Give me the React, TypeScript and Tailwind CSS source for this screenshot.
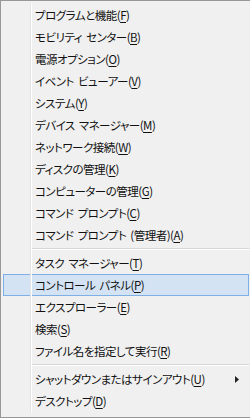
import React from "react";

type Item = { label: string; key: string; highlight?: boolean; submenu?: boolean } | "sep";

const items: Item[] = [
  { label: "プログラムと機能", key: "F" },
  { label: "モビリティ センター", key: "B" },
  { label: "電源オプション", key: "O" },
  { label: "イベント ビューアー", key: "V" },
  { label: "システム", key: "Y" },
  { label: "デバイス マネージャー", key: "M" },
  { label: "ネットワーク接続", key: "W" },
  { label: "ディスクの管理", key: "K" },
  { label: "コンピューターの管理", key: "G" },
  { label: "コマンド プロンプト", key: "C" },
  { label: "コマンド プロンプト (管理者)", key: "A" },
  "sep",
  { label: "タスク マネージャー", key: "T" },
  { label: "コントロール パネル", key: "P", highlight: true },
  { label: "エクスプローラー", key: "E" },
  { label: "検索", key: "S" },
  { label: "ファイル名を指定して実行", key: "R" },
  "sep",
  { label: "シャットダウンまたはサインアウト", key: "U", submenu: true },
  { label: "デスクトップ", key: "D" },
];

export default function App() {
  return (
    <div className="w-[250px] h-[418px] overflow-hidden bg-[#f0f0f0]">
      <div
        className="relative w-[252px] h-[418px] border border-[#979797] bg-[#f0f0f0] px-[2px] pt-[3px] pb-[5px] text-[11.5px] tracking-[-0.5px] [word-spacing:2px] text-[#111] [font-feature-settings:'palt']"
        style={{ fontFamily: '"Noto Sans CJK JP", "Noto Sans", sans-serif' }}
      >
        {items.map((it, i) =>
          it === "sep" ? (
            <div key={i} className="h-[6px] pt-[2px] pl-[28px]">
              <div className="h-px bg-[#d7d7d7]" />
              <div className="h-px bg-white" />
            </div>
          ) : (
            <div
              key={i}
              className={
                "relative h-[22px] flex items-center pl-[31px] border leading-none " +
                (it.highlight ? "border-[#7eb0e6] bg-[#d3e3f4]" : "border-transparent")
              }
            >
              <span className="whitespace-nowrap pt-px">
                {it.label}(<span className="underline underline-offset-2">{it.key}</span>)
              </span>
              {it.submenu && (
                <svg className="absolute right-[9px] top-[7px]" width="4" height="7" viewBox="0 0 4 7">
                  <path d="M0 0 L4 3.5 L0 7 Z" fill="#222" />
                </svg>
              )}
            </div>
          )
        )}
        <div className="absolute left-[29px] top-[3px] bottom-[5px] w-[2px] flex">
          <div className="w-px bg-[#e2e3e3]" />
          <div className="w-px bg-white" />
        </div>
      </div>
    </div>
  );
}
